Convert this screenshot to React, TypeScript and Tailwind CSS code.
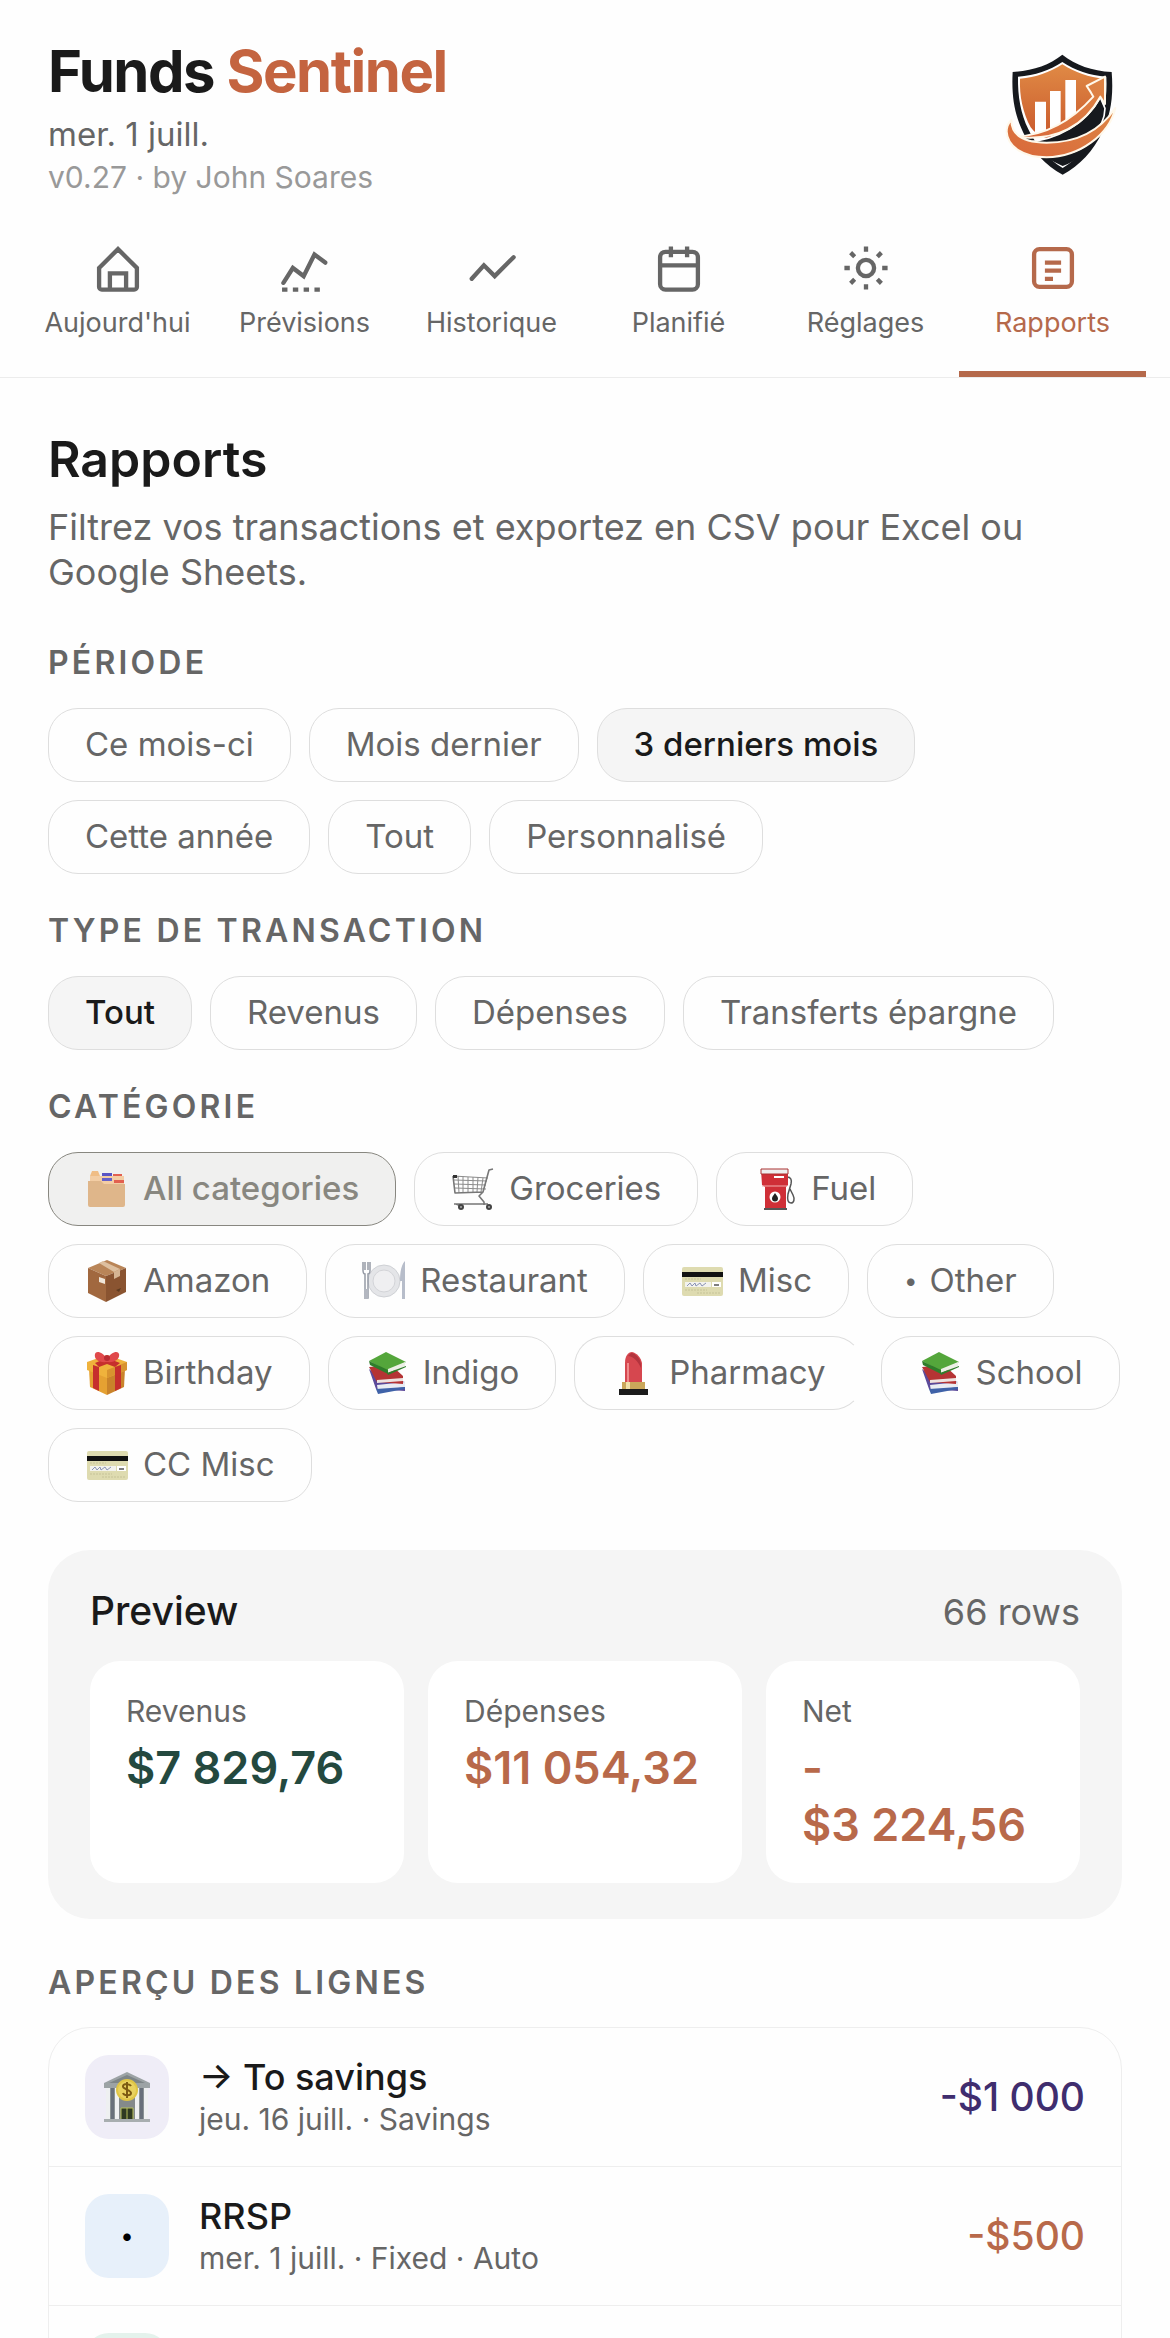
import { useState } from "react";
import type { ReactNode } from "react";
import clsx from "clsx";

const Logo = () => (
  <svg viewBox="75 30 351 390" className="w-[117px] h-[130px] shrink-0" role="img" aria-label="Funds Sentinel">
    <defs>
      <linearGradient id="shield" x1="0" y1="0" x2="0" y2="1">
        <stop offset="0" stopColor="#e08a45" />
        <stop offset="1" stopColor="#c9582c" />
      </linearGradient>
      <linearGradient id="swoosh" x1="0" y1="1" x2="1" y2="0">
        <stop offset="0" stopColor="#d9683a" />
        <stop offset="1" stopColor="#dd8544" />
      </linearGradient>
    </defs>
    <path d="M247 44C288 76 335 92 395 96C401 170 392 225 366 278C340 332 300 376 248 404C196 376 156 332 130 278C104 225 94 170 98 96C158 92 206 76 247 44Z" fill="#16191e" />
    <path d="M247 66C286 92 328 106 379 110C382 170 374 220 351 268C328 316 292 358 248 384C204 358 168 316 145 268C122 220 113 170 114 110C166 106 208 92 247 66Z" fill="#fff" />
    <path d="M247 73C286 98 326 112 373 116C376 168 368 216 346 262C330 290 290 300 248 300C204 300 172 290 152 262C128 216 118 168 120 116C168 112 208 98 247 73Z" fill="url(#shield)" />
    <path d="M165 185H198V285H165ZM210 153H242V275H210ZM256 120H288V250H256Z" fill="#fff" />
    <path d="M361 172L375 205C374 240 362 262 340 280L250 318L140 306C230 300 320 250 361 172Z" fill="#16191e" stroke="#fff" strokeWidth="5" />
    <path d="M108 290C190 286 268 250 340 170L333 158L320 138L375 110L375 192L361 170C315 254 232 306 108 290Z" fill="url(#swoosh)" stroke="#fff8ea" strokeWidth="6" strokeLinejoin="round" />
    <path d="M180 338C250 356 310 338 352 290C328 335 290 362 248 378C222 366 200 354 180 338Z" fill="#16191e" />
    <path d="M94 240C94 290 140 308 200 308C290 308 360 272 406 204C388 284 300 350 200 352C130 352 82 320 80 275C80 258 86 248 94 240Z" fill="url(#swoosh)" stroke="#fff8ea" strokeWidth="6" strokeLinejoin="round" />
  </svg>
);

const NavIcon = ({ children }: { children: ReactNode }) => (
  <svg viewBox="0 0 20 20" className="size-[54px]" fill="none" stroke="currentColor" strokeWidth="1.6" aria-hidden="true">
    {children}
  </svg>
);

const tabs = [
  { label: "Aujourd'hui", icon: <path d="M3 10l7-7 7 7v7a1 1 0 0 1-1 1H4a1 1 0 0 1-1-1zM7 18v-6h6v6" /> },
  {
    label: "Prévisions",
    icon: (
      <>
        <path d="M2 15.5L5.5 10l4 3 4-8 4 3" strokeLinecap="round" />
        <path d="M1.5 18H16" strokeDasharray="2 2" />
      </>
    ),
  },
  { label: "Historique", icon: <path d="M2.5 14L7 9l4 4 7-7" strokeLinecap="round" /> },
  {
    label: "Planifié",
    icon: (
      <>
        <rect x="3" y="4" width="14" height="14" rx="2" />
        <path d="M3 9h14M7 2v4M13 2v4" />
      </>
    ),
  },
  {
    label: "Réglages",
    icon: (
      <>
        <circle cx="10" cy="10" r="3" />
        <path d="M10 2v2M10 16v2M2 10h2M16 10h2M4.3 4.3l1.5 1.5M14.2 14.2l1.5 1.5M15.7 4.3l-1.5 1.5M5.8 14.2l-1.5 1.5" />
      </>
    ),
  },
  {
    label: "Rapports",
    icon: (
      <>
        <rect x="3" y="3" width="14" height="14" rx="2" />
        <path d="M7 8h6M7 11h6M7 14h3" />
      </>
    ),
  },
];

const Emoji = ({ children }: { children: ReactNode }) => (
  <svg viewBox="0 0 44 44" className="size-11 shrink-0" aria-hidden="true">
    {children}
  </svg>
);

const Dividers = () => (
  <Emoji>
    <path d="M5 9l2-5h6l2 5z" fill="#f0bd85" />
    <path d="M17 6h10v3H17z" fill="#5a55c4" />
    <path d="M28 7h9v3h-9z" fill="#e2604f" />
    <path d="M5 9h34v8H5z" fill="#f3cda4" />
    <path d="M17 11h10v3H17z" fill="#6560c8" />
    <path d="M29 13h10v3H29z" fill="#e2604f" />
    <path d="M3 14h13l3 3h21v21a2 2 0 0 1-2 2H5a2 2 0 0 1-2-2z" fill="#dfb68a" />
  </Emoji>
);

const Cart = () => (
  <Emoji>
    <path d="M2 9l35 2M3 13l33 1M3 17l32 1M4 21l31 1M7 9l1 17M12 9v17M17 10v16M22 10v15M27 10l-1 15M32 11l-2 14" stroke="#8c8c8c" strokeWidth="1" fill="none" />
    <path d="M42 2l-4 1-6 22-4 4 5 6v3M2 9l2 17 28-1M3 37h34M5 37l5 2" stroke="#777" strokeWidth="1.6" fill="none" strokeLinejoin="round" />
    <path d="M2 8h4v3H2z" fill="#333" />
    <circle cx="10" cy="40" r="3" fill="#444" />
    <circle cx="38" cy="40" r="3" fill="#444" />
    <circle cx="10" cy="40" r="1" fill="#aaa" />
    <circle cx="38" cy="40" r="1" fill="#aaa" />
  </Emoji>
);

const FuelPump = () => (
  <Emoji>
    <path d="M34 10c4 0 5 3 4 7l-3 10c-1 6 0 9 3 9s4-4 2-8l-3-6" fill="none" stroke="#555" strokeWidth="1.5" />
    <path d="M8 3h27v15l-2 2v22H12V20l-3-2z" fill="#cf2f37" />
    <path d="M8 2h27v5H8z" fill="#eee" stroke="#a33" strokeWidth="1" />
    <path d="M9 19h25" stroke="#f3b0b0" strokeWidth="1" />
    <path d="M21 10h10" stroke="#fff" strokeWidth="2" />
    <path d="M11 41h23v2H11z" fill="#555" />
    <circle cx="22" cy="30" r="5.5" fill="#fff" />
    <path d="M22 26c2 3 3 4 3 5.5a3 3 0 0 1-6 0c0-1.5 1-2.5 3-5.500z" fill="#222" />
  </Emoji>
);

const Package = () => (
  <Emoji>
    <path d="M22 1l19 8-20 8L3 9z" fill="#b98558" />
    <path d="M3 9l18 8v26L3 34z" fill="#a1683f" />
    <path d="M41 9v24L21 43V17z" fill="#8a5431" />
    <path d="M14 4l4-2 17 8-6 3z" fill="#ddbf9f" />
    <path d="M29 13l6-3v7l-6 3z" fill="#d5b493" />
    <path d="M14 18l6 2v5l-6-2z" fill="#efe6da" />
    <path d="M31 31l5-2-2 4z" fill="#5d3a20" />
  </Emoji>
);

const Plate = () => (
  <Emoji>
    <circle cx="22" cy="22" r="16" fill="#e4e5e8" stroke="#cfd1d5" strokeWidth="1" />
    <circle cx="22" cy="22" r="11" fill="#efeff1" stroke="#d3d4d8" strokeWidth="1" />
    <path d="M1 3v8c0 3 1 4 2 4v24h3V15c1 0 2-1 2-4V3M3 3v8M6 3v8" fill="none" stroke="#959aa5" strokeWidth="1.5" />
    <path d="M2 30h4v10H2z" fill="#b3b7c0" />
    <path d="M43 2c-4 4-5 12-5 20h2v18h3z" fill="#b7bdca" />
  </Emoji>
);

const CreditCard = () => (
  <Emoji>
    <rect x="2" y="8" width="41" height="29" rx="2" fill="#dedbb0" />
    <path d="M2 13h41v5H2z" fill="#111" />
    <path d="M5 23h26v5H5z" fill="#f3f3ee" />
    <path d="M32 23h9v5h-9z" fill="#fff" />
    <path d="M7 27l3-3 2 3 3-3 1 3 4-3 2 3 4-3" stroke="#8a93b5" strokeWidth="1" fill="none" />
    <path d="M34 26h5" stroke="#555" strokeWidth="1.5" />
    <path d="M5 20h16M5 31h22M17 34h23" stroke="#c6c398" strokeWidth="1" strokeDasharray="2 1" />
  </Emoji>
);

const Gift = () => (
  <Emoji>
    <path d="M4 18l18 8v18L5 36z" fill="#e5a132" />
    <path d="M40 18l-18 8v18l17-8z" fill="#c9832a" />
    <path d="M2 11l20-7 20 7v8l-20 8-20-8z" fill="#efb23c" />
    <path d="M22 19l20-8v8l-20 8z" fill="#d8932f" />
    <path d="M8 14l6 2v24l-6-3zM30 16l6-2v23l-6 3z" fill="#c62f2d" />
    <path d="M10 12l12-5 13 5-5 4-8-3-8 3z" fill="#c62f2d" />
    <path d="M22 8c-4-7-11-9-12-5s2 9 12 8c9 1 13-4 12-8S26 1 22 8z" fill="#e0494b" />
    <circle cx="22" cy="7" r="3" fill="#b92c33" />
  </Emoji>
);

const Books = () => (
  <Emoji>
    <path d="M4 18l7 20 29 2V31l-26-5z" fill="#5c4a9a" />
    <path d="M12 34l28-3v5l-27 4z" fill="#e9edf3" />
    <path d="M11 38l29-2v2l-27 5z" fill="#3f62a8" />
    <path d="M4 16l22-2 12 11v8l-26-2z" fill="#b53434" />
    <path d="M12 29l26-2v3l-26 2z" fill="#eee3df" />
    <path d="M4 10l17-9 20 10-18 9z" fill="#54a63b" />
    <path d="M4 10l19 9v4L5 14z" fill="#2f7d2a" />
    <path d="M23 18l17-7v4l-17 7z" fill="#ecefe6" />
    <path d="M22 22l19-7v1l-18 8z" fill="#2f7d2a" />
  </Emoji>
);

const Lipstick = () => (
  <Emoji>
    <path d="M14 34V12c0-7 3-11 7-11 5 1 9 6 10 11v22z" fill="#d6474f" />
    <path d="M17 5c5 0 10 5 13 12 1-8-5-15-10-15z" fill="#b3343e" />
    <path d="M17 12v21" stroke="#ef8a8b" strokeWidth="2" />
    <path d="M11 31h23v8H11z" fill="#caa75a" />
    <path d="M15 31h4v8h-4z" fill="#f1e0a8" />
    <path d="M8 38h29v6H8z" fill="#1b1b1b" />
  </Emoji>
);

const Bank = () => (
  <svg viewBox="0 0 48 54" className="w-12 h-[54px]" aria-hidden="true">
    <path d="M1 13L24 2l23 11v5H1z" fill="#9ca3a5" />
    <path d="M6 13L24 5l18 8z" fill="#7d8587" />
    <path d="M3 18h42v32H3z" fill="#8a9294" />
    <path d="M15 18h18v32H15z" fill="#848a8b" />
    <path d="M3 18h4v31H3zM12 18h4v31h-4zM32 18h4v31h-4zM41 18h4v31h-4z" fill="#eef0f1" />
    <path d="M8 18h3v31H8zM37 18h3v31h-3z" fill="#68707a" />
    <path d="M18 38h12v12H18z" fill="#2f3a22" stroke="#b8c05a" strokeWidth="1" />
    <path d="M24 38v12" stroke="#b8c05a" strokeWidth="1" />
    <path d="M1 49h46v3H1z" fill="#a8aeb0" />
    <circle cx="24" cy="20" r="11" fill="#e0c545" />
    <circle cx="24" cy="20" r="9" fill="#e9d25f" />
    <path d="M28 16c-1-2-7-3-8 0s8 4 8 7-7 3-8 0M24 12v16" stroke="#7c5a12" strokeWidth="2" fill="none" />
  </svg>
);

const periods = ["Ce mois-ci", "Mois dernier", "3 derniers mois", "Cette année", "Tout", "Personnalisé"];
const types = ["Tout", "Revenus", "Dépenses", "Transferts épargne"];
const categories = [
  { name: "All categories", icon: <Dividers /> },
  { name: "Groceries", icon: <Cart /> },
  { name: "Fuel", icon: <FuelPump /> },
  { name: "Amazon", icon: <Package /> },
  { name: "Restaurant", icon: <Plate /> },
  { name: "Misc", icon: <CreditCard /> },
  { name: "Other", icon: null },
  { name: "Birthday", icon: <Gift /> },
  { name: "Indigo", icon: <Books /> },
  { name: "Pharmacy", icon: <Lipstick />, className: "border-r-transparent" },
  { name: "School", icon: <Books /> },
  { name: "CC Misc", icon: <CreditCard /> },
];

const chipBase = "flex items-center h-[74px] px-9 rounded-[30px] border text-[33px] whitespace-nowrap";
const chipIdle = "border-[#dedede] text-[#666]";
const chipActive = "border-[#dedede] bg-[#f5f5f5] text-[#1a1a1a] font-medium";

const SectionTitle = ({ children }: { children: ReactNode }) => (
  <h3 className="text-[32px] leading-10 font-semibold tracking-widest uppercase text-[#666]">{children}</h3>
);

const ChipGroup = ({ options, value, onChange }: { options: string[]; value: string; onChange: (v: string) => void }) => (
  <div className="flex flex-wrap gap-[18px]">
    {options.map((option) => (
      <button
        key={option}
        type="button"
        aria-pressed={option === value}
        onClick={() => onChange(option)}
        className={clsx(chipBase, option === value ? chipActive : chipIdle)}
      >
        {option}
      </button>
    ))}
  </div>
);

const StatCard = ({ label, value, className }: { label: string; value: ReactNode; className: string }) => (
  <div className="bg-white rounded-[30px] px-9 py-[30px]">
    <p className="text-[30px] leading-10 text-[#666]">{label}</p>
    <p className={clsx("mt-2 text-[45px] leading-[57px] font-semibold", className)}>{value}</p>
  </div>
);

const rows = [
  {
    title: "→ To savings",
    meta: "jeu. 16 juill. · Savings",
    amount: "-$1\u00a0000",
    icon: <Bank />,
    tile: "bg-[#efedf7]",
    color: "text-[#3f2d6e]",
  },
  { title: "RRSP", meta: "mer. 1 juill. · Fixed · Auto", amount: "-$500", icon: "•", tile: "bg-[#e7f0fa]", color: "text-[#b8694a]" },
  { title: "", meta: "", amount: "", icon: "", tile: "bg-[#e4f2ec]", color: "" },
];

const App = () => {
  const [tab, setTab] = useState("Rapports");
  const [period, setPeriod] = useState("3 derniers mois");
  const [type, setType] = useState("Tout");
  const [category, setCategory] = useState("All categories");

  return (
    <div className="h-screen overflow-hidden bg-[#fefefe] font-['Inter',sans-serif] text-[#1a1a1a]">
      <header className="border-b border-[#ececec]">
        <div className="flex justify-between px-12 pt-[35px]">
          <div>
            <h1 className="text-[58px] leading-[72px] font-bold tracking-tight">
              Funds <span className="text-[#c46440]">Sentinel</span>
            </h1>
            <p className="mt-1 text-[33px] leading-[46px] text-[#666]">mer. 1 juill.</p>
            <p className="text-[30px] leading-10 text-[#999]">v0.27 · by John Soares</p>
          </div>
          <div className="pt-[15px]">
            <Logo />
          </div>
        </div>

        <nav className="grid grid-cols-6 px-6 mt-5">
          {tabs.map(({ label, icon }) => (
            <button
              key={label}
              type="button"
              aria-current={label === tab ? "page" : undefined}
              onClick={() => setTab(label)}
              className={clsx(
                "flex flex-col items-center gap-[10px] pt-6 pb-[30px] border-b-6 text-[27px] leading-9",
                label === tab ? "border-[#b5694b] text-[#b5694b]" : "border-transparent text-[#666]"
              )}
            >
              <NavIcon>{icon}</NavIcon>
              {label}
            </button>
          ))}
        </nav>
      </header>

      <main className="px-12 pt-[51px]">
        <h2 className="text-[50px] leading-[60px] font-semibold">Rapports</h2>
        <p className="mt-4 text-[36px] leading-[45px] text-[#666]">
          Filtrez vos transactions et exportez en CSV pour Excel ou Google Sheets.
        </p>

        <section className="mt-12 flex flex-col gap-[25px]">
          <SectionTitle>Période</SectionTitle>
          <ChipGroup options={periods} value={period} onChange={setPeriod} />
        </section>

        <section className="mt-[37px] flex flex-col gap-[25px]">
          <SectionTitle>Type de transaction</SectionTitle>
          <ChipGroup options={types} value={type} onChange={setType} />
        </section>

        <section className="mt-[37px] flex flex-col gap-[25px]">
          <SectionTitle>Catégorie</SectionTitle>
          <div className="flex flex-wrap gap-[18px]">
            {categories.map(({ name, icon, className }) => (
              <button
                key={name}
                type="button"
                aria-pressed={name === category}
                onClick={() => setCategory(name)}
                className={clsx(
                  chipBase,
                  icon ? "gap-[14px]" : "gap-3",
                  name === category ? "border-[#888780] bg-[#f0f0ef] text-[#888780] font-medium" : chipIdle,
                  className
                )}
              >
                {icon ?? <span className="text-[24px]">•</span>}
                {name}
              </button>
            ))}
          </div>
        </section>

        <section className="mt-12 rounded-[42px] bg-[#f5f5f5] px-[42px] py-9">
          <div className="flex items-center justify-between h-[51px]">
            <h3 className="text-[39px] font-medium">Preview</h3>
            <span className="text-[36px] text-[#666]">66 rows</span>
          </div>
          <div className="grid grid-cols-3 gap-6 mt-6">
            <StatCard label="Revenus" value={"$7\u00a0829,76"} className="text-[#24493f]" />
            <StatCard label="Dépenses" value={"$11\u00a0054,32"} className="text-[#b8694a]" />
            <StatCard
              label="Net"
              value={
                <>
                  -<br />
                  {"$3\u00a0224,56"}
                </>
              }
              className="text-[#b8694a]"
            />
          </div>
        </section>

        <section className="mt-11 flex flex-col gap-6">
          <SectionTitle>Aperçu des lignes</SectionTitle>
          <ul className="border border-[#eee] rounded-[42px] divide-y divide-[#eee]">
            {rows.map((row) => (
              <li key={row.tile} className="flex items-center gap-[30px] px-9 py-[27px]">
                <div className={clsx("flex items-center justify-center size-[84px] rounded-3xl text-[24px] text-black", row.tile)}>
                  {row.icon}
                </div>
                <div className="flex-1">
                  <p className="text-[36px] leading-[44px] font-medium">{row.title}</p>
                  <p className="text-[30px] leading-10 text-[#666]">{row.meta}</p>
                </div>
                <span className={clsx("text-[39px] font-medium", row.color)}>{row.amount}</span>
              </li>
            ))}
          </ul>
        </section>
      </main>
    </div>
  );
};

export default App;
